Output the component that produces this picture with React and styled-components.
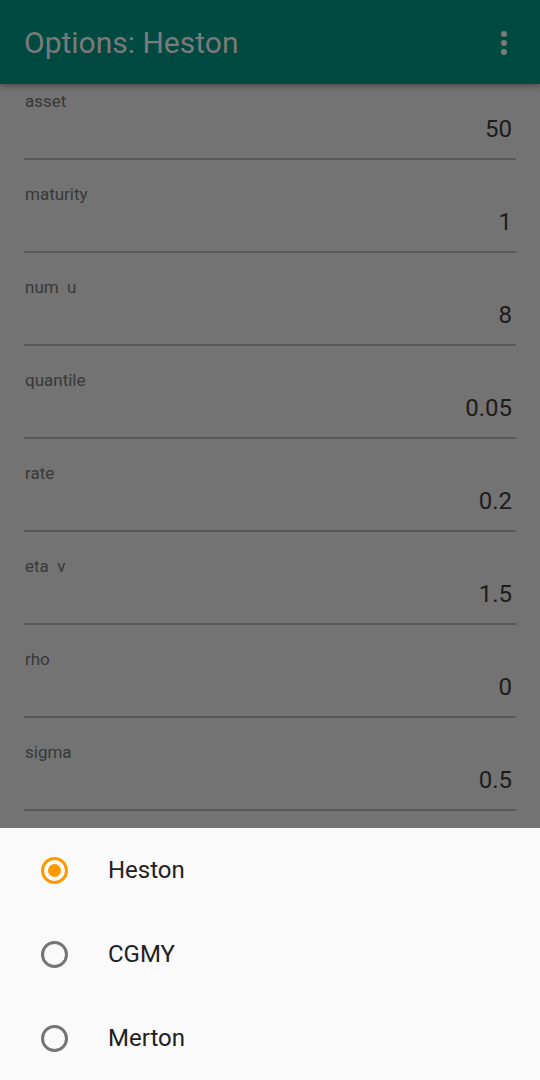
import React from "react";
import styled, { createGlobalStyle } from "styled-components";

const fields = [
  { label: "asset", value: "50" },
  { label: "maturity", value: "1" },
  { label: "num  u", value: "8" },
  { label: "quantile", value: "0.05" },
  { label: "rate", value: "0.2" },
  { label: "eta  v", value: "1.5" },
  { label: "rho", value: "0" },
  { label: "sigma", value: "0.5" },
];

const models = ["Heston", "CGMY", "Merton"];

export default function App() {
  return (
    <>
      <GlobalStyle />
      <Screen>
        <AppBar>
          <Title>Options: Heston</Title>
          <MenuButton>
            <svg width="8" height="26" viewBox="0 0 8 26">
              <circle cx="4" cy="4" r="3" fill="#7a7a7a" />
              <circle cx="4" cy="13" r="3" fill="#7a7a7a" />
              <circle cx="4" cy="22" r="3" fill="#7a7a7a" />
            </svg>
          </MenuButton>
        </AppBar>
        <Form>
          {fields.map((f) => (
            <Field key={f.label}>
              <Label>{f.label}</Label>
              <Value>{f.value}</Value>
            </Field>
          ))}
        </Form>
        <Sheet>
          {models.map((m, i) => (
            <Option key={m}>
              <Radio checked={i === 0} />
              <OptionText>{m}</OptionText>
            </Option>
          ))}
        </Sheet>
      </Screen>
    </>
  );
}

const GlobalStyle = createGlobalStyle`
  html, body {
    margin: 0;
    padding: 0;
    background: #737373;
  }
  body {
    font-family: Roboto, "Liberation Sans", sans-serif;
  }
`;

const Screen = styled.div`
  width: 540px;
  height: 1080px;
  display: flex;
  flex-direction: column;
  overflow: hidden;
  background-color: #737373;
`;

const AppBar = styled.div`
  height: 84px;
  flex-shrink: 0;
  display: flex;
  align-items: center;
  justify-content: space-between;
  padding: 0 24px;
  background-color: #004a42;
  box-shadow: 0 2px 6px rgba(0, 0, 0, 0.35);
  position: relative;
  z-index: 1;
`;

const Title = styled.div`
  font-size: 30px;
  color: #7a7a7a;
  margin-top: 1px;
`;

const MenuButton = styled.div`
  display: flex;
  align-items: center;
  margin-right: 8px;
  margin-top: 1px;
`;

const Form = styled.div`
  flex: 1;
  display: flex;
  flex-direction: column;
  overflow: hidden;
`;

const Field = styled.div`
  height: 93px;
  flex-shrink: 0;
  padding: 0 24px;
  box-sizing: border-box;
`;

const Label = styled.div`
  margin-top: 8px;
  padding-left: 1px;
  font-size: 17px;
  line-height: 18px;
  white-space: pre;
  color: #383838;
`;

const Value = styled.div`
  margin-top: 5px;
  padding: 0 4px 15px 0;
  font-size: 24px;
  line-height: 28px;
  text-align: right;
  color: #1c1c1c;
  border-bottom: 2px solid #585858;
`;

const Sheet = styled.div`
  height: 252px;
  flex-shrink: 0;
  background-color: #fafafa;
  display: flex;
  flex-direction: column;
`;

const Option = styled.div`
  height: 84px;
  display: flex;
  align-items: center;
  padding-left: 41px;
`;

const Radio = styled.div`
  width: 27px;
  height: 27px;
  box-sizing: border-box;
  border-radius: 50%;
  border: 3px solid ${(p) => (p.checked ? "#ff9800" : "#757575")};
  display: flex;
  align-items: center;
  justify-content: center;
  &::after {
    content: "";
    width: 13px;
    height: 13px;
    border-radius: 50%;
    background-color: ${(p) => (p.checked ? "#ff9800" : "transparent")};
  }
`;

const OptionText = styled.div`
  margin-left: 40px;
  font-size: 24px;
  color: #212121;
`;
